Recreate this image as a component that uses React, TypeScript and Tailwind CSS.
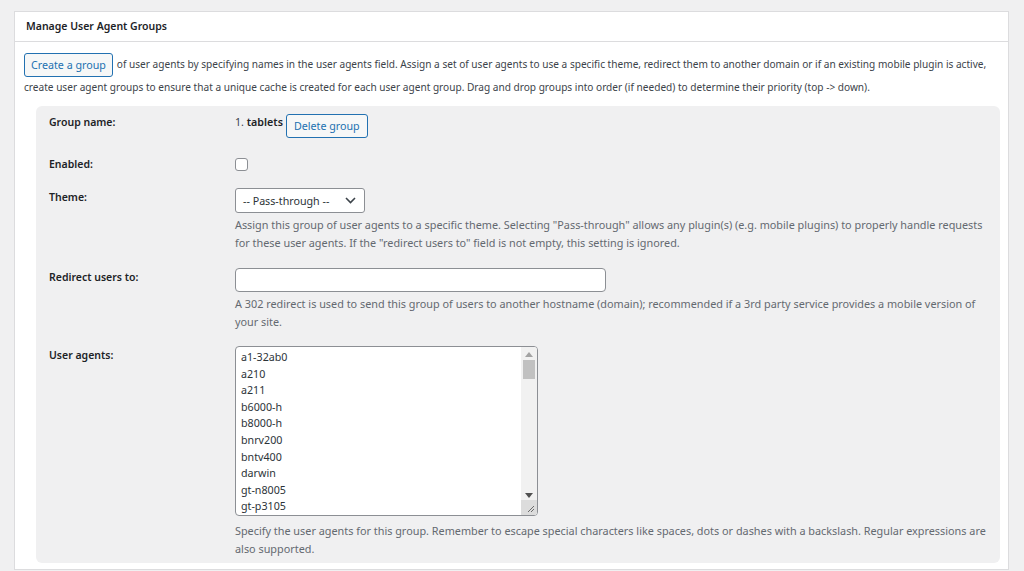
import React from "react";

const agents = [
  "a1-32ab0",
  "a210",
  "a211",
  "b6000-h",
  "b8000-h",
  "bnrv200",
  "bntv400",
  "darwin",
  "gt-n8005",
  "gt-p3105",
];

const Label = ({ children, className = "" }: { children: React.ReactNode; className?: string }) => (
  <div className={`w-[186px] shrink-0 text-[10.5px] font-semibold text-[#1d2327] leading-4 ${className}`}>{children}</div>
);

const Desc = ({ children, className = "" }: { children: React.ReactNode; className?: string }) => (
  <p className={`text-[10.85px] text-[#646970] leading-[17.5px] ${className}`}>{children}</p>
);

const App = () => {
  return (
    <div
      className="min-h-[571px] w-[1024px] bg-[#f0f0f1] pt-[11px] pl-[14px] text-[10.7px] text-[#3c434a] overflow-hidden"
      style={{ fontFamily: "'Noto Sans', 'Open Sans', sans-serif" }}
    >
      <div className="w-[995px] border border-[#dcdcde] bg-white">
        {/* Header */}
        <div className="h-[30px] border-b border-[#dcdcde] pl-[11px] flex items-center">
          <h2 className="text-[10.5px] font-semibold text-[#1d2327]">Manage User Agent Groups</h2>
        </div>

        <div className="px-[9px] pt-[11px] pb-[6px]">
          {/* Intro */}
          <p className="leading-[20px] text-[10.1px]">
            <button className="inline-block align-middle h-[24px] px-[6px] rounded-[3px] border border-[#2271b1] bg-[#f6f7f7] text-[#2271b1] text-[10.7px] leading-[22px] mr-[4px]">
              Create a group
            </button>
            of user agents by specifying names in the user agents field. Assign a set of user agents to use a specific theme, redirect them to another domain or if an existing mobile plugin is active, create user agent groups to ensure that a unique cache is created for each user agent group. Drag and drop groups into order (if needed) to determine their priority (top -&gt; down).
          </p>

          {/* Group box */}
          <div className="mt-[9px] ml-[12px] w-[964px] rounded-[6px] bg-[#f0f0f1] pl-[13px] pr-[10px] pt-[8px] pb-[6px]">
            {/* Group name */}
            <div className="flex">
              <Label>Group name:</Label>
              <div className="flex items-start">
                <span className="leading-4 text-[#3c434a]">
                  1. <b className="font-semibold text-[#1d2327]">tablets</b>
                </span>
                <button className="ml-[3px] h-[24px] px-[7px] rounded-[3px] border border-[#2271b1] bg-[#f6f7f7] text-[#2271b1] leading-[22px]">
                  Delete group
                </button>
              </div>
            </div>

            {/* Enabled */}
            <div className="flex items-center mt-[18px] h-4">
              <Label>Enabled:</Label>
              <span className="block w-[13px] h-[13px] rounded-[3px] border border-[#8c8f94] bg-white" />
            </div>

            {/* Theme */}
            <div className="flex mt-[16px]">
              <Label className="mt-[1px]">Theme:</Label>
              <div className="flex-1">
                <div className="w-[130px] h-[25px] rounded-[3px] border border-[#8c8f94] bg-white flex items-center justify-between pl-[7px] pr-[8px] text-[#2c3338]">
                  <span className="leading-4">-- Pass-through --</span>
                  <svg width="11" height="7" viewBox="0 0 11 7" fill="none">
                    <path d="M1 1 L5.5 5.5 L10 1" stroke="#3c434a" strokeWidth="1.6" />
                  </svg>
                </div>
                <Desc className="mt-[3px]">
                  Assign this group of user agents to a specific theme. Selecting "Pass-through" allows any plugin(s) (e.g. mobile plugins) to properly handle requests for these user agents. If the "redirect users to" field is not empty, this setting is ignored.
                </Desc>
              </div>
            </div>

            {/* Redirect */}
            <div className="flex mt-[17px]">
              <Label className="mt-[1px]">Redirect users to:</Label>
              <div className="flex-1">
                <div className="w-[371px] h-[24px] rounded-[4px] border border-[#8c8f94] bg-white" />
                <Desc className="mt-[3px]">
                  A 302 redirect is used to send this group of users to another hostname (domain); recommended if a 3rd party service provides a mobile version of
                  <br />
                  your site.
                </Desc>
              </div>
            </div>

            {/* User agents */}
            <div className="flex mt-[16px]">
              <Label className="mt-[1px]">User agents:</Label>
              <div className="flex-1">
                <div className="relative w-[303px] h-[170px] rounded-[4px] border border-[#8c8f94] bg-white overflow-hidden flex">
                  <div className="flex-1 pl-[5px] pt-[2px] text-[#2c3338] leading-[16.6px]">
                    {agents.map((a) => (
                      <div key={a}>{a}</div>
                    ))}
                  </div>
                  <div className="w-[16px] bg-[#f1f1f1] flex flex-col items-center">
                    <svg width="8" height="5" viewBox="0 0 8 5" className="mt-[5px]">
                      <path d="M0 5 L4 0 L8 5 Z" fill="#a3a3a3" />
                    </svg>
                    <div className="mt-[3px] w-[12px] h-[19px] bg-[#c1c1c1]" />
                    <div className="flex-1" />
                    <svg width="8" height="5" viewBox="0 0 8 5" className="mb-[17px]">
                      <path d="M0 0 L8 0 L4 5 Z" fill="#505050" />
                    </svg>
                  </div>
                  <div className="absolute right-0 bottom-0 w-[16px] h-[15px] bg-[#dcdcdc] flex items-end justify-end p-[2px]">
                    <svg width="9" height="9" viewBox="0 0 9 9">
                      <path d="M8 2 L2 8 M8 5 L5 8" stroke="#6b6b6b" strokeWidth="1" />
                    </svg>
                  </div>
                </div>
                <Desc className="mt-[6px]">
                  Specify the user agents for this group. Remember to escape special characters like spaces, dots or dashes with a backslash. Regular expressions are also supported.
                </Desc>
              </div>
            </div>
          </div>
        </div>
      </div>
    </div>
  );
};

export default App;
